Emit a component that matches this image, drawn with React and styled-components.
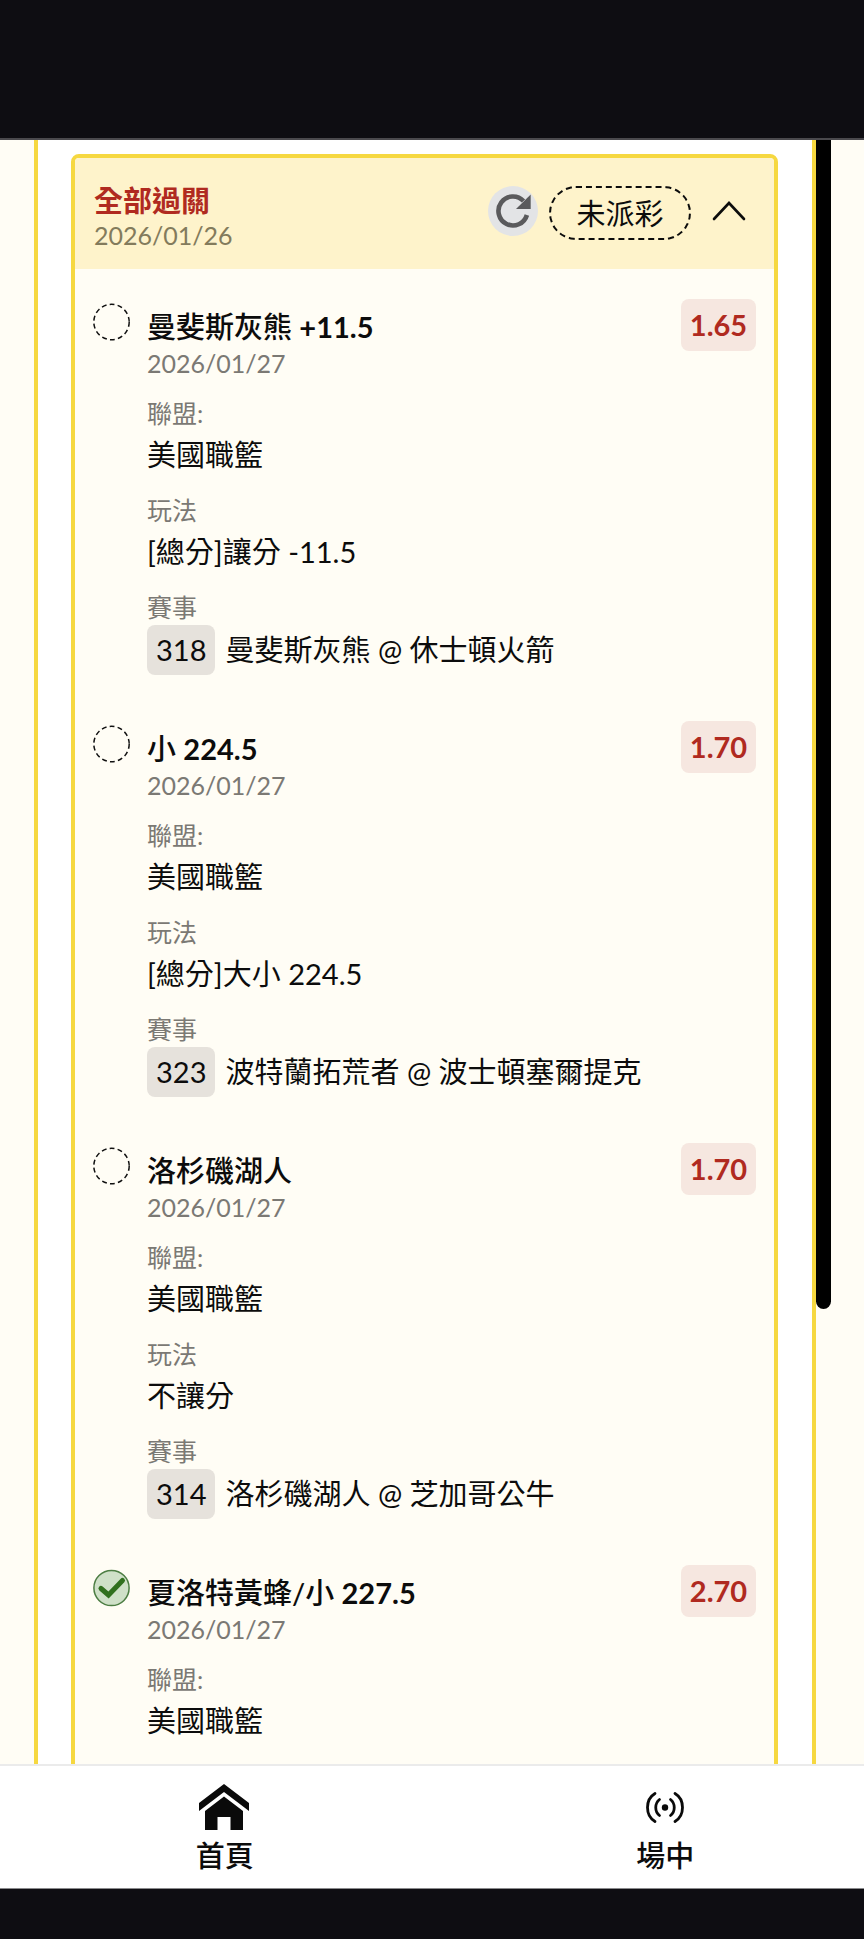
import styled, { createGlobalStyle } from 'styled-components';

const GlobalStyle = createGlobalStyle`
  * {
    box-sizing: border-box;
  }

  body {
    margin: 0;
    background-color: #0e0d12;
    color: #0c0c0c;
    font-family: Lato, "Noto Sans CJK TC", sans-serif;
  }

  button {
    padding: 0;
    border: none;
    background: none;
    color: inherit;
    font: inherit;
    cursor: pointer;
  }
`;

const Screen = styled.div`
  height: 100vh;
  display: flex;
  flex-direction: column;
`;

const TopBar = styled.div`
  flex: none;
  height: 140px;
  border-bottom: 2px solid #4a494d;
`;

const BottomBar = styled.div`
  flex: none;
  height: 51px;
  border-top: 1px solid #8a8a8c;
`;

const Content = styled.main`
  flex: 1;
  min-height: 0;
  display: flex;
  padding: 0 33px 0 34px;
  background-color: #fffdf5;
  overflow: hidden;
`;

const Panel = styled.div`
  flex: 1;
  padding: 14px 34px 14px 33px;
  background-color: #fff;
  border: solid #f6d840;
  border-width: 0 4px;
`;

const ScrollThumb = styled.div`
  width: 15px;
  height: 72%;
  background-color: #000;
  border-radius: 0 0 8px 8px;
`;

const Card = styled.section`
  background-color: #fffdf5;
  border: 4px solid #f6d840;
  border-radius: 8px;
`;

const CardHeader = styled.header`
  display: flex;
  justify-content: space-between;
  padding: 25px 18px 18px 19px;
  background-color: #fef3cb;
  border-radius: 4px 4px 0 0;
`;

const CardTitle = styled.h1`
  margin: 0;
  font-size: 29px;
  font-weight: 700;
  line-height: 36px;
  color: #b02a20;
`;

const DateText = styled.div`
  font-size: 25px;
  line-height: 32px;
  color: ${props => props.$warm ? '#837b5c' : '#7b7974'};
`;

const Actions = styled.div`
  display: flex;
  align-items: flex-start;
  gap: 11px;
  padding-top: 3px;
`;

const RefreshButton = styled.button`
  width: 50px;
  height: 50px;
  display: flex;
  align-items: center;
  justify-content: center;
  border-radius: 50%;
  background-color: #e3e4e6;
`;

const StatusPill = styled.button`
  width: 142px;
  height: 54px;
  padding-top: 2px;
  border: 2px dashed #0c0c0c;
  border-radius: 27px;
  font-size: 29px;
  line-height: 40px;
`;

const ToggleButton = styled.button`
  width: 54px;
  height: 50px;
  display: flex;
  align-items: center;
  justify-content: center;
`;

const BetList = styled.div`
  display: flex;
  flex-direction: column;
  gap: 46px;
  padding: 30px 18px 46px;
`;

const Bet = styled.article`
  display: flex;
  align-items: flex-start;
  padding-top: 8px;
`;

const StatusIcon = styled.svg`
  flex: none;
  width: 38px;
  height: 38px;
  margin-right: 16px;
  margin-top: -4px;
`;

const BetBody = styled.div`
  flex: 1;
`;

const BetTitle = styled.h2`
  margin: 0;
  font-size: 29px;
  font-weight: 500;
  line-height: 40px;

  strong {
    font-weight: 700;
  }
`;

const Details = styled.dl`
  display: flex;
  flex-direction: column;
  gap: 13px;
  margin: 16px 0 0;
`;

const Label = styled.dt`
  font-size: 25px;
  line-height: 36px;
  color: #7b7974;
`;

const Value = styled.dd`
  margin: 0;
  font-size: 29px;
  line-height: 48px;
`;

const Match = styled.dd`
  display: flex;
  align-items: center;
  gap: 10px;
  margin: 0;
  font-size: 29px;
  line-height: 50px;
`;

const MatchNumber = styled.span`
  padding: 0 9px;
  border-radius: 8px;
  background-color: #e6e2dc;
`;

const Odds = styled.div`
  width: 75px;
  border-radius: 8px;
  background-color: #f6e7e0;
  color: #b02a20;
  font-size: 29px;
  font-weight: 700;
  line-height: 52px;
  text-align: center;
  margin-top: -8px;
`;

const Nav = styled.nav`
  flex: none;
  height: 124px;
  display: grid;
  grid-template-columns: 52% 50%;
  border-top: 2px solid #ebebeb;
  background-color: #fff;
  overflow: hidden;
`;

const NavLink = styled.a`
  display: flex;
  flex-direction: column;
  align-items: center;
  padding-top: 16px;
  color: inherit;
  font-size: 29px;
  font-weight: 500;
  line-height: 40px;
  text-decoration: none;

  svg {
    margin-bottom: 6px;
  }
`;

const bets = [
  {
    name: '曼斐斯灰熊',
    line: '+11.5',
    odds: '1.65',
    play: '[總分]讓分 -11.5',
    number: '318',
    match: '曼斐斯灰熊 @ 休士頓火箭',
  },
  {
    name: '小',
    line: '224.5',
    odds: '1.70',
    play: '[總分]大小 224.5',
    number: '323',
    match: '波特蘭拓荒者 @ 波士頓塞爾提克',
  },
  {
    name: '洛杉磯湖人',
    odds: '1.70',
    play: '不讓分',
    number: '314',
    match: '洛杉磯湖人 @ 芝加哥公牛',
  },
  {
    name: '夏洛特黃蜂/小',
    line: '227.5',
    odds: '2.70',
    won: true,
  },
];

const PendingIcon = () => (
  <StatusIcon viewBox="0 0 38 38" role="img" aria-label="未派彩">
    <circle cx="18.5" cy="19" r="17.7" fill="none" stroke="#111" strokeWidth="1.5" strokeDasharray="4.9 3.2" />
  </StatusIcon>
);

const WonIcon = () => (
  <StatusIcon viewBox="0 0 38 38" role="img" aria-label="過關">
    <circle cx="18.5" cy="19" r="17.6" fill="#cfe0c8" stroke="#4c7d43" strokeWidth="1.5" />
    <path d="M8 19.5L15.5 26L29.5 11.5" fill="none" stroke="#31701f" strokeWidth="5" strokeLinecap="round" strokeLinejoin="miter" />
  </StatusIcon>
);

const BetItem = ({ bet }) => (
  <Bet>
    {bet.won ? <WonIcon /> : <PendingIcon />}
    <BetBody>
      <BetTitle>
        {bet.name} {bet.line && <strong>{bet.line}</strong>}
      </BetTitle>
      <DateText>2026/01/27</DateText>
      <Details>
        <div>
          <Label>聯盟:</Label>
          <Value>美國職籃</Value>
        </div>
        {bet.play && (
          <div>
            <Label>玩法</Label>
            <Value>{bet.play}</Value>
          </div>
        )}
        {bet.match && (
          <div>
            <Label>賽事</Label>
            <Match>
              <MatchNumber>{bet.number}</MatchNumber>
              {bet.match}
            </Match>
          </div>
        )}
      </Details>
    </BetBody>
    <Odds>{bet.odds}</Odds>
  </Bet>
);

const App = () => (
  <>
    <GlobalStyle />
    <Screen>
      <TopBar />
      <Content>
        <Panel>
          <Card>
            <CardHeader>
              <div>
                <CardTitle>全部過關</CardTitle>
                <DateText $warm>2026/01/26</DateText>
              </div>
              <Actions>
                <RefreshButton aria-label="重新整理">
                  <svg width="50" height="50" viewBox="0 0 50 50">
                    <path d="M38.9 29A14.5 14.5 0 1 1 35.5 15" fill="none" stroke="#5a5a5c" strokeWidth="4.6" />
                    <path d="M42.7 8.5V23H28Z" fill="#5a5a5c" />
                  </svg>
                </RefreshButton>
                <StatusPill>未派彩</StatusPill>
                <ToggleButton aria-label="收合">
                  <svg width="36" height="24" viewBox="0 0 36 24">
                    <path d="M3 20L18 4L33 20" fill="none" stroke="#0c0c0c" strokeWidth="2.6" strokeLinecap="round" />
                  </svg>
                </ToggleButton>
              </Actions>
            </CardHeader>
            <BetList>
              {bets.map(bet => <BetItem key={bet.name} bet={bet} />)}
            </BetList>
          </Card>
        </Panel>
        <ScrollThumb />
      </Content>
      <Nav>
        <NavLink href="#home">
          <svg width="52" height="48" viewBox="0 0 52 48">
            <path d="M25 2L50 21V29L25 10L0 29V21Z" fill="#0a0a0a" />
            <path d="M25 14.5L44 29V48H31.5V35H18.5V48H6V29Z" fill="#0a0a0a" />
          </svg>
          首頁
        </NavLink>
        <NavLink href="#live">
          <svg width="52" height="48" viewBox="0 0 52 48" fill="none" stroke="#0a0a0a" strokeWidth="2.8" strokeLinecap="round">
            <circle cx="26" cy="25.5" r="3.2" fill="#0a0a0a" stroke="none" />
            <path d="M16 11.5C6 17.5 6 33.5 16 39.5" />
            <path d="M36 11.5C46 17.5 46 33.5 36 39.5" />
            <path d="M20.5 17.5C15.5 21.5 15.5 29.5 20.5 33.5" />
            <path d="M31.5 17.5C36.5 21.5 36.5 29.5 31.5 33.5" />
          </svg>
          場中
        </NavLink>
      </Nav>
      <BottomBar />
    </Screen>
  </>
);

export default App;
